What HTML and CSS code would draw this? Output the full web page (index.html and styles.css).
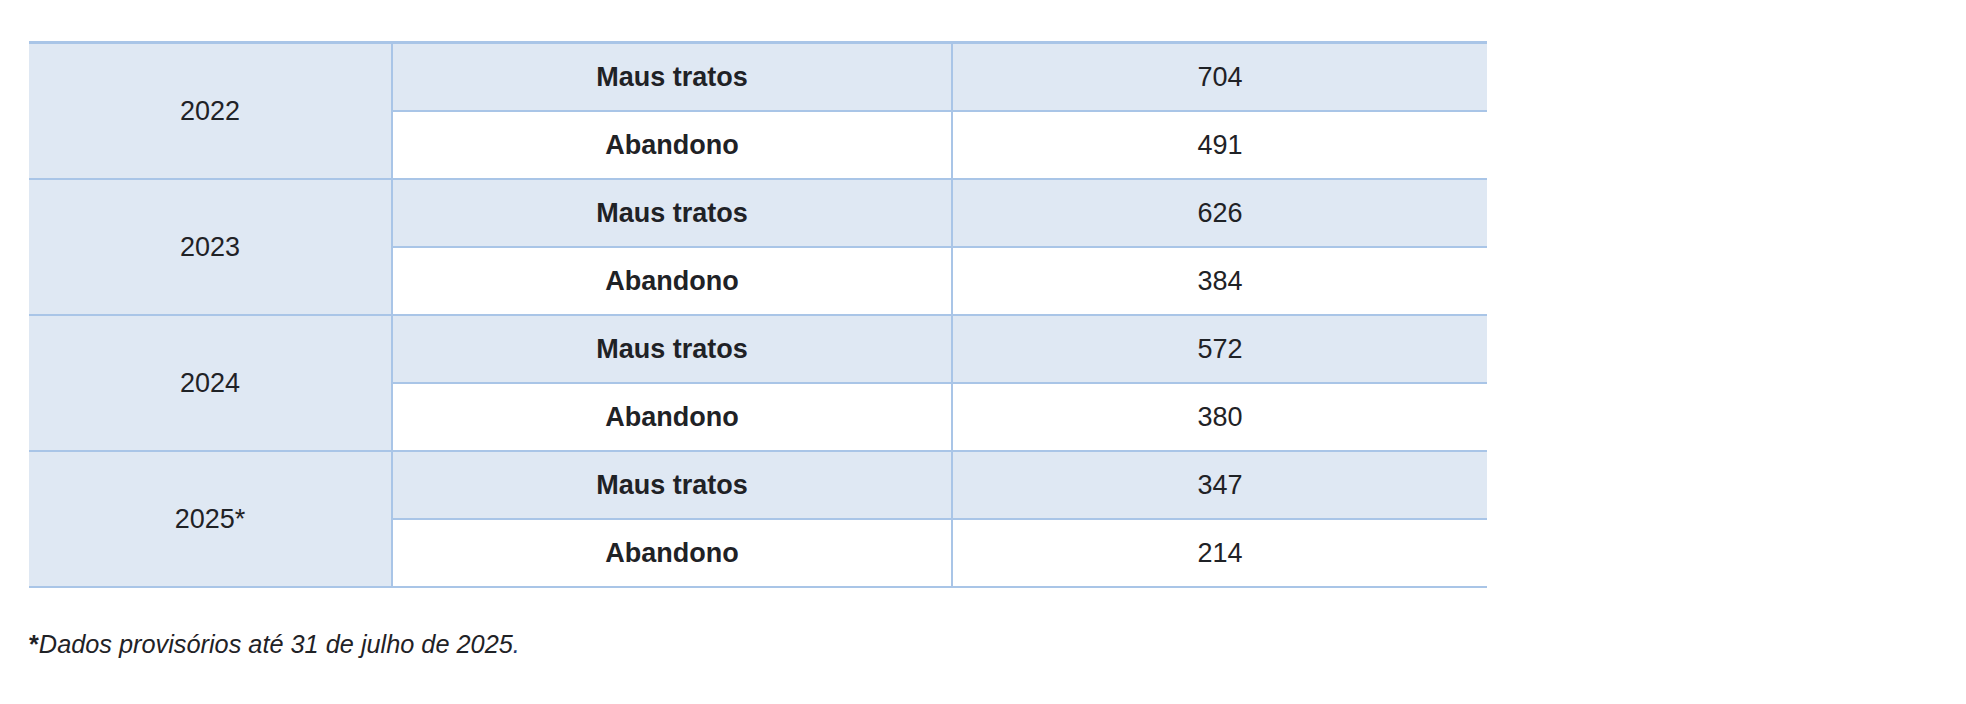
FILE: index.html
```html
<!DOCTYPE html>
<html lang="pt">
<head>
<meta charset="utf-8">
<title>Dados</title>
<link rel="stylesheet" href="styles.css">
</head>
<body>
<main class="page">
  <table class="data">
    <colgroup>
      <col class="c-year">
      <col class="c-type">
      <col class="c-num">
    </colgroup>
    <tbody>
      <tr class="odd">
        <td class="year" rowspan="2">2022</td>
        <td class="type">Maus tratos</td>
        <td class="num">704</td>
      </tr>
      <tr class="even">
        <td class="type">Abandono</td>
        <td class="num">491</td>
      </tr>
      <tr class="odd">
        <td class="year" rowspan="2">2023</td>
        <td class="type">Maus tratos</td>
        <td class="num">626</td>
      </tr>
      <tr class="even">
        <td class="type">Abandono</td>
        <td class="num">384</td>
      </tr>
      <tr class="odd">
        <td class="year" rowspan="2">2024</td>
        <td class="type">Maus tratos</td>
        <td class="num">572</td>
      </tr>
      <tr class="even">
        <td class="type">Abandono</td>
        <td class="num">380</td>
      </tr>
      <tr class="odd">
        <td class="year" rowspan="2">2025*</td>
        <td class="type">Maus tratos</td>
        <td class="num">347</td>
      </tr>
      <tr class="even">
        <td class="type">Abandono</td>
        <td class="num">214</td>
      </tr>
    </tbody>
  </table>
  <p class="note"><span class="star">*</span><em>Dados provisórios até 31 de julho de 2025</em><span class="dot">.</span></p>
</main>
</body>
</html>
```

FILE: styles.css
```css
html, body {
  margin: 0;
  padding: 0;
  background: #ffffff;
}

body {
  font-family: "Liberation Sans", Arial, sans-serif;
  color: #1f2226;
}

.page {
  padding: 41px 0 0 29px;
}

.data {
  border-collapse: separate;
  border-spacing: 0;
  border-top: 3px solid #a9c5e7;
  table-layout: fixed;
  width: 1458px;
}

.c-year { width: 362px; }
.c-type { width: 560px; }
.c-num { width: 536px; }

.data td {
  box-sizing: border-box;
  height: 68px;
  padding: 0;
  text-align: center;
  vertical-align: middle;
  font-size: 27px;
  border-bottom: 2px solid #a9c5e7;
}

.data td.type,
.data td.num {
  border-left: 2px solid #a9c5e7;
}

.data td.year {
  background: #dfe8f3;
}

.data tr.odd td.type,
.data tr.odd td.num {
  background: #dfe8f3;
}

.data tr.even td {
  background: #ffffff;
}

.data td.type {
  font-weight: bold;
}

.note {
  margin: 39px 0 0 0;
  font-size: 25.3px;
  line-height: 35px;
}

.note .star {
  font-style: normal;
  font-weight: bold;
}

.note em {
  font-style: italic;
}

.note .dot {
  font-style: italic;
  color: #1d3b70;
}
```
